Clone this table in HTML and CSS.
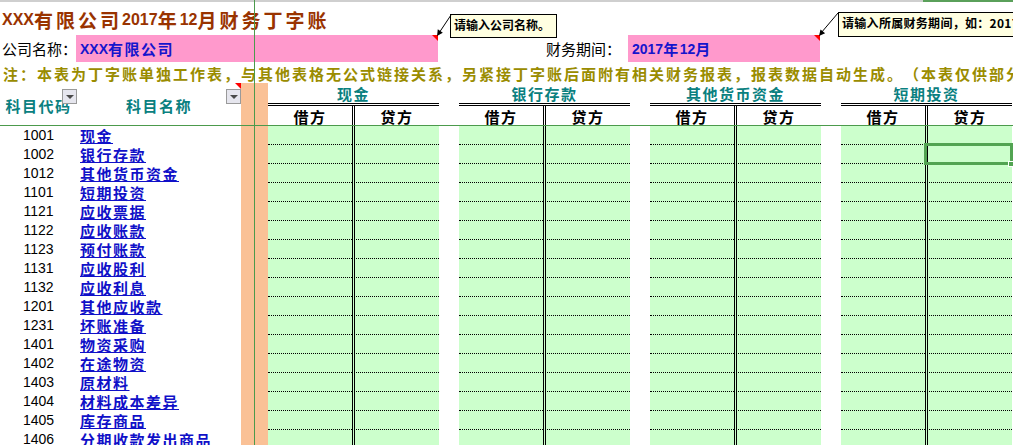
FILE: index.html
```html
<!DOCTYPE html>
<html lang="zh-CN">
<head>
<meta charset="utf-8">
<title>丁字账</title>
<link rel="stylesheet" href="styles.css">
</head>
<body>
<div class="sheet">
  <div class="colhead"><div class="ch-grey"></div><div class="ch-sel"></div></div>
  <div class="title"><span class="lat">XXX</span>有限公司<span class="lat">2017</span>年<span class="lat">12</span>月财务丁字账</div>
  <div class="info">
    <div class="lbl lbl1">公司名称：</div>
    <div class="pink pink1"><span class="lat">XXX</span>有限公司<span class="tri"></span></div>
    <div class="lbl lbl2">财务期间：</div>
    <div class="pink pink2"><span class="lat">2017</span>年<span class="lat">12</span>月<span class="tri"></span></div>
  </div>
  <div class="note">注：本表为丁字账单独工作表，与其他表格无公式链接关系，另紧接丁字账后面附有相关财务报表，报表数据自动生成。（本表仅供部分参考）</div>

  <div class="head">
    <div class="hA">科目代码<span class="flt"></span></div>
    <div class="hB">科目名称<span class="flt"></span><span class="tri"></span></div>
    <div class="oc"></div>
    <div class="hgrp"><div class="gt">现金</div><div class="gsub"><div>借方</div><div>贷方</div></div></div>
    <div class="gap"></div>
    <div class="hgrp"><div class="gt">银行存款</div><div class="gsub"><div>借方</div><div>贷方</div></div></div>
    <div class="gap"></div>
    <div class="hgrp"><div class="gt">其他货币资金</div><div class="gsub"><div>借方</div><div>贷方</div></div></div>
    <div class="gap"></div>
    <div class="hgrp"><div class="gt">短期投资</div><div class="gsub"><div>借方</div><div>贷方</div></div></div>
  </div>

  <div class="rows">
    <div class="row"><div class="code">1001</div><div class="name"><a>现金</a></div><div class="oc"></div><div class="grp"><i></i><i></i></div><div class="gap"></div><div class="grp"><i></i><i></i></div><div class="gap"></div><div class="grp"><i></i><i></i></div><div class="gap"></div><div class="grp"><i></i><i></i></div></div>
    <div class="row"><div class="code">1002</div><div class="name"><a>银行存款</a></div><div class="oc"></div><div class="grp"><i></i><i></i></div><div class="gap"></div><div class="grp"><i></i><i></i></div><div class="gap"></div><div class="grp"><i></i><i></i></div><div class="gap"></div><div class="grp"><i></i><i></i></div></div>
    <div class="row"><div class="code">1012</div><div class="name"><a>其他货币资金</a></div><div class="oc"></div><div class="grp"><i></i><i></i></div><div class="gap"></div><div class="grp"><i></i><i></i></div><div class="gap"></div><div class="grp"><i></i><i></i></div><div class="gap"></div><div class="grp"><i></i><i></i></div></div>
    <div class="row"><div class="code">1101</div><div class="name"><a>短期投资</a></div><div class="oc"></div><div class="grp"><i></i><i></i></div><div class="gap"></div><div class="grp"><i></i><i></i></div><div class="gap"></div><div class="grp"><i></i><i></i></div><div class="gap"></div><div class="grp"><i></i><i></i></div></div>
    <div class="row"><div class="code">1121</div><div class="name"><a>应收票据</a></div><div class="oc"></div><div class="grp"><i></i><i></i></div><div class="gap"></div><div class="grp"><i></i><i></i></div><div class="gap"></div><div class="grp"><i></i><i></i></div><div class="gap"></div><div class="grp"><i></i><i></i></div></div>
    <div class="row"><div class="code">1122</div><div class="name"><a>应收账款</a></div><div class="oc"></div><div class="grp"><i></i><i></i></div><div class="gap"></div><div class="grp"><i></i><i></i></div><div class="gap"></div><div class="grp"><i></i><i></i></div><div class="gap"></div><div class="grp"><i></i><i></i></div></div>
    <div class="row"><div class="code">1123</div><div class="name"><a>预付账款</a></div><div class="oc"></div><div class="grp"><i></i><i></i></div><div class="gap"></div><div class="grp"><i></i><i></i></div><div class="gap"></div><div class="grp"><i></i><i></i></div><div class="gap"></div><div class="grp"><i></i><i></i></div></div>
    <div class="row"><div class="code">1131</div><div class="name"><a>应收股利</a></div><div class="oc"></div><div class="grp"><i></i><i></i></div><div class="gap"></div><div class="grp"><i></i><i></i></div><div class="gap"></div><div class="grp"><i></i><i></i></div><div class="gap"></div><div class="grp"><i></i><i></i></div></div>
    <div class="row"><div class="code">1132</div><div class="name"><a>应收利息</a></div><div class="oc"></div><div class="grp"><i></i><i></i></div><div class="gap"></div><div class="grp"><i></i><i></i></div><div class="gap"></div><div class="grp"><i></i><i></i></div><div class="gap"></div><div class="grp"><i></i><i></i></div></div>
    <div class="row"><div class="code">1201</div><div class="name"><a>其他应收款</a></div><div class="oc"></div><div class="grp"><i></i><i></i></div><div class="gap"></div><div class="grp"><i></i><i></i></div><div class="gap"></div><div class="grp"><i></i><i></i></div><div class="gap"></div><div class="grp"><i></i><i></i></div></div>
    <div class="row"><div class="code">1231</div><div class="name"><a>坏账准备</a></div><div class="oc"></div><div class="grp"><i></i><i></i></div><div class="gap"></div><div class="grp"><i></i><i></i></div><div class="gap"></div><div class="grp"><i></i><i></i></div><div class="gap"></div><div class="grp"><i></i><i></i></div></div>
    <div class="row"><div class="code">1401</div><div class="name"><a>物资采购</a></div><div class="oc"></div><div class="grp"><i></i><i></i></div><div class="gap"></div><div class="grp"><i></i><i></i></div><div class="gap"></div><div class="grp"><i></i><i></i></div><div class="gap"></div><div class="grp"><i></i><i></i></div></div>
    <div class="row"><div class="code">1402</div><div class="name"><a>在途物资</a></div><div class="oc"></div><div class="grp"><i></i><i></i></div><div class="gap"></div><div class="grp"><i></i><i></i></div><div class="gap"></div><div class="grp"><i></i><i></i></div><div class="gap"></div><div class="grp"><i></i><i></i></div></div>
    <div class="row"><div class="code">1403</div><div class="name"><a>原材料</a></div><div class="oc"></div><div class="grp"><i></i><i></i></div><div class="gap"></div><div class="grp"><i></i><i></i></div><div class="gap"></div><div class="grp"><i></i><i></i></div><div class="gap"></div><div class="grp"><i></i><i></i></div></div>
    <div class="row"><div class="code">1404</div><div class="name"><a>材料成本差异</a></div><div class="oc"></div><div class="grp"><i></i><i></i></div><div class="gap"></div><div class="grp"><i></i><i></i></div><div class="gap"></div><div class="grp"><i></i><i></i></div><div class="gap"></div><div class="grp"><i></i><i></i></div></div>
    <div class="row"><div class="code">1405</div><div class="name"><a>库存商品</a></div><div class="oc"></div><div class="grp"><i></i><i></i></div><div class="gap"></div><div class="grp"><i></i><i></i></div><div class="gap"></div><div class="grp"><i></i><i></i></div><div class="gap"></div><div class="grp"><i></i><i></i></div></div>
    <div class="row"><div class="code">1406</div><div class="name"><a>分期收款发出商品</a></div><div class="oc"></div><div class="grp"><i></i><i></i></div><div class="gap"></div><div class="grp"><i></i><i></i></div><div class="gap"></div><div class="grp"><i></i><i></i></div><div class="gap"></div><div class="grp"><i></i><i></i></div></div>
  </div>

  <div class="fz-v"></div>
  <div class="fz-h"></div>
  <div class="sel"></div>
  <div class="sel-h"></div>

  <div class="cmt cmt1">请输入公司名称。</div>
  <div class="cmt cmt2">请输入所属财务期间，如：2017年12月</div>
  <svg class="arrows" width="1013" height="445" viewBox="0 0 1013 445">
    <line x1="451" y1="15" x2="439" y2="33" stroke="#000" stroke-width="1"/>
    <polygon points="437,36 442.8,32.7 437.8,29.3" fill="#000"/>
    <line x1="838" y1="13" x2="821" y2="33" stroke="#000" stroke-width="1"/>
    <polygon points="819,36 825.1,33.3 820.5,29.5" fill="#000"/>
  </svg>
</div>
</body>
</html>
```

FILE: styles.css
```css
* {
  box-sizing: border-box;
  margin: 0;
  padding: 0;
}

html, body {
  width: 1013px;
  height: 445px;
  overflow: hidden;
  background: #fff;
}

body {
  font-family: "Noto Sans CJK SC", "Noto Sans", sans-serif;
  color: #000;
  text-spacing-trim: space-all;
}

.sheet {
  position: relative;
  width: 1013px;
  height: 445px;
  overflow: hidden;
  white-space: nowrap;
}

.lat {
  font-family: "Liberation Sans", Arial, sans-serif;
  letter-spacing: 0;
}

/* column header strip */
.colhead {
  display: flex;
  height: 2px;
}
.ch-grey {
  flex: 0 0 923px;
  background: #cfcfcf;
}
.ch-sel {
  flex: 1;
  background: #5aa05a;
}

/* title */
.title {
  height: 33px;
  display: flex;
  align-items: center;
  padding: 2px 0 0 2px;
  font-size: 19px;
  font-weight: 700;
  line-height: 1;
  letter-spacing: 3px;
  color: #993300;
}
.title .lat {
  font-size: 16px;
}

/* info row */
.info {
  display: flex;
  height: 28px;
}
.lbl {
  display: flex;
  align-items: center;
  min-width: 0;
  height: 27px;
  font-size: 15px;
  line-height: 1;
}
.lbl1 {
  flex: 0 0 76px;
  padding-left: 2px;
}
.lbl2 {
  flex: 0 0 190px;
  justify-content: flex-end;
  padding-right: 7px;
}
.pink {
  position: relative;
  display: flex;
  align-items: center;
  min-width: 0;
  height: 27px;
  padding-left: 4px;
  background: #ff99cc;
  font-size: 15px;
  font-weight: 700;
  letter-spacing: 1.5px;
  line-height: 1;
  color: #1515cc;
}
.pink .lat {
  font-size: 14px;
}
.pink1 {
  flex: 0 0 362px;
}
.pink2 {
  flex: 0 0 192px;
}
.tri {
  position: absolute;
  top: 0;
  right: 0;
  width: 0;
  height: 0;
  border-top: 6px solid #ff0000;
  border-left: 6px solid transparent;
}

/* note */
.note {
  height: 20px;
  display: flex;
  align-items: center;
  padding-left: 3px;
  font-size: 15px;
  font-weight: 700;
  line-height: 1;
  letter-spacing: 2px;
  color: #9a8c00;
}

/* header */
.head {
  display: flex;
  height: 43px;
}
.hA,
.hB {
  position: relative;
  display: flex;
  align-items: center;
  justify-content: center;
  min-width: 0;
  font-size: 15px;
  font-weight: 700;
  letter-spacing: 1.5px;
  line-height: 1;
  color: #0a8080;
  padding-top: 1px;
}
.hA {
  flex: 0 0 77px;
}
.hB {
  flex: 0 0 164px;
}
.flt {
  position: absolute;
  top: 6px;
  width: 15px;
  height: 15px;
  border: 1px solid #9a9a9a;
  background: #e6e6ee;
}
.hA .flt {
  left: 62px;
}
.hB .flt {
  left: 149px;
}
.flt::after {
  content: "";
  position: absolute;
  left: 3px;
  top: 5px;
  border-left: 4px solid transparent;
  border-right: 4px solid transparent;
  border-top: 4px solid #4a4a4a;
}

.oc {
  flex: 0 0 27px;
  background: #fac196;
}
.gap {
  flex: 0 0 20px;
}
.hgrp {
  flex: 0 0 171px;
  display: flex;
  flex-direction: column;
}
.gt {
  height: 23px;
  display: flex;
  align-items: center;
  justify-content: center;
  padding-top: 1px;
  border-bottom: 3px double #000;
  font-size: 15px;
  font-weight: 700;
  letter-spacing: 1.5px;
  line-height: 1;
  color: #0a8080;
}
.gsub {
  display: flex;
  height: 20px;
}
.gsub div {
  flex: 0 0 84px;
  display: flex;
  align-items: center;
  justify-content: center;
  font-size: 15px;
  font-weight: 700;
  letter-spacing: 1.5px;
  line-height: 1;
}
.gsub div + div {
  flex-basis: 87px;
  border-left: 3px double #000;
}

/* data rows */
.row {
  display: flex;
  height: 19px;
}
.code {
  flex: 0 0 77px;
  text-align: center;
  font-family: "Liberation Sans", Arial, sans-serif;
  font-size: 14px;
  line-height: 19px;
}
.name {
  flex: 0 0 164px;
  min-width: 0;
  padding-left: 3px;
  font-size: 15px;
  font-weight: 700;
  letter-spacing: 1.5px;
  line-height: 19px;
}
.name a {
  color: #1010c8;
  text-decoration: underline;
  text-decoration-thickness: 1px;
  text-underline-offset: 1px;
}
.grp {
  flex: 0 0 171px;
  display: flex;
}
.grp i {
  flex: 0 0 84px;
  background: #ccffcc;
  border-bottom: 1px dotted #000;
}
.grp i + i {
  flex-basis: 87px;
  border-left: 3px double #000;
}

/* overlays */
.fz-v {
  position: absolute;
  left: 254px;
  top: 0;
  width: 1px;
  height: 445px;
  background: #4c9a4c;
}
.fz-h {
  position: absolute;
  left: 0;
  top: 125px;
  width: 1013px;
  height: 1px;
  background: #4c9a4c;
}
.sel {
  position: absolute;
  left: 924px;
  top: 143px;
  width: 89px;
  height: 22px;
  border: 3px solid #52a452;
}
.sel-h {
  position: absolute;
  left: 1008px;
  top: 161px;
  width: 6px;
  height: 6px;
  background: #52a452;
  border: 1px solid #fff;
}

.cmt {
  position: absolute;
  background: #ffffe1;
  border: 1px solid #000;
  padding: 3px 0 0 3px;
  font-size: 12px;
  font-weight: 700;
  line-height: 14px;
  color: #000;
}
.cmt1 {
  left: 450px;
  top: 14px;
  width: 107px;
  height: 24px;
}
.cmt2 {
  left: 838px;
  top: 12px;
  width: 230px;
  height: 25px;
  letter-spacing: 0.3px;
}
.arrows {
  position: absolute;
  left: 0;
  top: 0;
  pointer-events: none;
}
```
